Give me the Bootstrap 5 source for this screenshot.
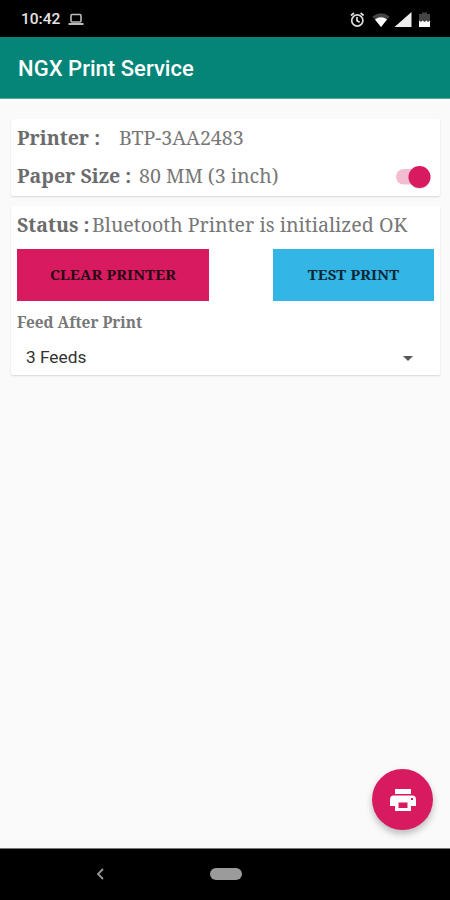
<!DOCTYPE html>
<html lang="en">
<head>
<meta charset="utf-8">
<meta name="viewport" content="width=device-width, initial-scale=1">
<title>NGX Print Service</title>
<link href="https://cdn.jsdelivr.net/npm/bootstrap@5.3.0/dist/css/bootstrap.min.css" rel="stylesheet">
<style>
body{background:#fafafa;font-family:Roboto,sans-serif;height:900px;overflow:hidden}
.statusbar{height:37px;background:#000;color:#e4e4e4;font-size:15.500px;font-weight:500;padding:2px 17px 0 21px}
.appbar{height:62px;background:#048577;border-bottom:1px solid #52a69c;padding:4px 18px 0}
.appbar h1{font-size:22px;font-weight:500;color:#fff;letter-spacing:.03px}
.content{padding:20px 10px 18px 11px}
.panel{border:0;border-radius:2px;background:#fff;box-shadow:0 1px 2px rgba(0,0,0,.14);padding:0 6px 1px}
.panel+.panel{margin-top:10px;padding-bottom:4px}
.serif{font-family:"Noto Serif","DejaVu Serif",serif;color:#777;white-space:nowrap}
.line{height:38px;font-size:19.600px}
.line b{color:#6c6c6c}
.w-printer{width:102px}
.w-size{width:122px}
.w-status{width:75px}
.toggle{width:35px;height:26px;margin-right:3px}
.actions{padding-top:5px}
.act{height:52px;border:0;border-radius:0;font-size:15px;font-weight:700;padding:0 0 1px;letter-spacing:.18px}
.act-clear,.act-clear:hover{width:192px;background:#d81b60;color:#2a0713}
.act-test,.act-test:hover{width:161px;background:#33b5e5;color:#0b2734}
.feed{font-size:15.400px;font-weight:700;height:44px}
.spin{height:26px;font-family:Roboto,sans-serif;font-size:17.300px;color:#333;padding:0 21px 0 9px}
.fab,.fab:hover{width:61px;height:61px;background:#d81b60;box-shadow:0 4px 7px rgba(0,0,0,.25);margin-right:7px}
.sysnav{height:52px;background:#000;border-top:1px solid #777;padding:0 0 1px 96px}
.pill{width:32px;height:12px;background:#9b9b9b;margin-left:106px}
</style>
</head>
<body class="d-flex flex-column">
<header>
  <div class="statusbar d-flex align-items-center">
    <span class="me-2">10:42</span>
    <svg width="16" height="13" viewBox="0 0 16 13"><rect x="3" y="1.500" width="10" height="7.500" rx="1" fill="none" stroke="#bbb" stroke-width="1.600"/><path d="M.5 10h15v2H.5z" fill="#bbb"/></svg>
    <svg class="ms-auto" width="83" height="18" viewBox="0 0 83 18">
      <g fill="none" stroke="#ddd" stroke-width="1.700"><circle cx="7.300" cy="9.500" r="5.600"/><path d="M1 4.500 4 2M13.600 4.500l-3-2.500M7 6v3.700l2.700 1.600"/></g>
      <path d="M22.500 5.500Q31-1 39.500 5.500L31 16z" fill="#444"/><path d="M25 8.500Q31 4 37 8.500L31 16z" fill="#fff"/>
      <path d="M61.500 1v15h-17z" fill="#eee"/>
      <path d="M69 3h3V1.500h5V3h3v8H69z" fill="#444"/><path d="M69 9.500l2 1.500 1.500-1.500L74.500 11l2-1.500L78 11l2-1.500V16H69z" fill="#fff"/>
    </svg>
  </div>
  <div class="appbar d-flex align-items-center"><h1 class="m-0">NGX Print Service</h1></div>
</header>
<main class="content flex-grow-1 d-flex flex-column">
  <section class="panel card serif">
    <div class="line d-flex align-items-center"><b class="w-printer">Printer :</b><span>BTP-3AA2483</span></div>
    <div class="line d-flex align-items-center"><b class="w-size">Paper Size :</b><span>80 MM (3 inch)</span>
      <svg class="toggle ms-auto" viewBox="0 0 35 26" role="img" aria-label="Paper size switch"><rect y="6" width="30" height="15.500" rx="7.700" fill="#f3bdd1"/><circle cx="23.500" cy="15" r="11" opacity=".12"/><circle cx="23.500" cy="14" r="11" fill="#d81b60"/></svg>
    </div>
  </section>
  <section class="panel card serif">
    <div class="line d-flex align-items-center"><b class="w-status">Status :</b><span>Bluetooth Printer is initialized OK</span></div>
    <div class="actions d-flex justify-content-between"><button class="btn act act-clear serif">CLEAR PRINTER</button><button class="btn act act-test serif">TEST PRINT</button></div>
    <div class="feed d-flex align-items-center">Feed After Print</div>
    <div class="spin d-flex align-items-center justify-content-between"><span>3 Feeds</span><svg width="10" height="5" viewBox="0 0 10 5"><path d="M0 0h10L5 5z" fill="#555"/></svg></div>
  </section>
  <button class="btn fab rounded-circle mt-auto ms-auto p-0 d-flex align-items-center justify-content-center" aria-label="Print"><svg width="26" height="24" viewBox="0 0 26 24"><path fill="#fff" d="M5 1h16v5H5zM4 7.500h18q4 0 4 4V18h-5v5H5v-5H0v-6.500q0-4 4-4z"/><path fill="#d81b60" d="M8.500 14.500h9v5.500h-9zM21 10h2v2h-2z"/></svg></button>
</main>
<footer class="sysnav d-flex align-items-center">
  <svg width="8" height="12" viewBox="0 0 8 12"><path d="M7 1 2 6l5 5" fill="none" stroke="#999" stroke-width="1.800"/></svg>
  <span class="pill rounded-pill"></span>
</footer>
<script src="https://cdn.jsdelivr.net/npm/bootstrap@5.3.0/dist/js/bootstrap.bundle.min.js"></script>
</body>
</html>
